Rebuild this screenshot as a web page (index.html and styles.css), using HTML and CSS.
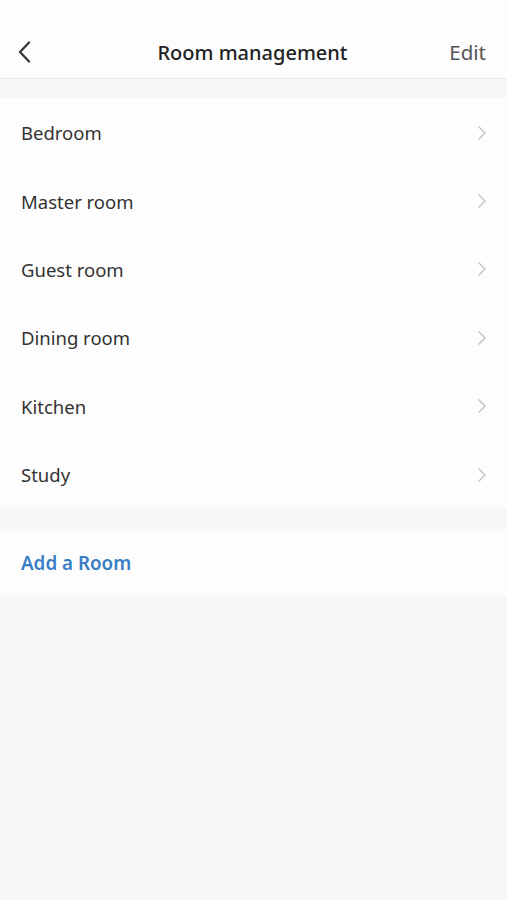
FILE: index.html
```html
<!DOCTYPE html>
<html>
<head>
<meta charset="utf-8">
<link rel="stylesheet" href="styles.css">
</head>
<body>
<div class="header">
  <div class="back">
    <svg width="14" height="22" viewBox="0 0 14 22"><path d="M12 1.5 L3 11 L12 20.5" fill="none" stroke="#333" stroke-width="2.2" stroke-linecap="round" stroke-linejoin="round"/></svg>
  </div>
  <div class="title">Room management</div>
  <div class="edit">Edit</div>
</div>
<div class="list">
  <div class="row"><span>Bedroom</span><svg class="chev" width="10" height="16" viewBox="0 0 10 16"><path d="M1.5 1.5 L8 8 L1.5 14.5" fill="none" stroke="#c8c8c8" stroke-width="1.6"/></svg></div>
  <div class="row"><span>Master room</span><svg class="chev" width="10" height="16" viewBox="0 0 10 16"><path d="M1.5 1.5 L8 8 L1.5 14.5" fill="none" stroke="#c8c8c8" stroke-width="1.6"/></svg></div>
  <div class="row"><span>Guest room</span><svg class="chev" width="10" height="16" viewBox="0 0 10 16"><path d="M1.5 1.5 L8 8 L1.5 14.5" fill="none" stroke="#c8c8c8" stroke-width="1.6"/></svg></div>
  <div class="row"><span>Dining room</span><svg class="chev" width="10" height="16" viewBox="0 0 10 16"><path d="M1.5 1.5 L8 8 L1.5 14.5" fill="none" stroke="#c8c8c8" stroke-width="1.6"/></svg></div>
  <div class="row"><span>Kitchen</span><svg class="chev" width="10" height="16" viewBox="0 0 10 16"><path d="M1.5 1.5 L8 8 L1.5 14.5" fill="none" stroke="#c8c8c8" stroke-width="1.6"/></svg></div>
  <div class="row"><span>Study</span><svg class="chev" width="10" height="16" viewBox="0 0 10 16"><path d="M1.5 1.5 L8 8 L1.5 14.5" fill="none" stroke="#c8c8c8" stroke-width="1.6"/></svg></div>
</div>
<div class="add">Add a Room</div>
</body>
</html>
```
FILE: styles.css
```css
html, body {
  margin: 0;
  padding: 0;
  background: #f7f7f7;
  font-family: "Noto Sans", "Liberation Sans", Arial, sans-serif;
  width: 507px;
  height: 900px;
}
.header {
  height: 78px;
  background: #fdfdfd;
  border-bottom: 1px solid #e8e8e8;
  display: flex;
  align-items: center;
}
.back {
  width: 50px;
  padding-left: 17px;
  padding-top: 26px;
  box-sizing: border-box;
  display: flex;
  align-items: center;
}
.title {
  flex: 1;
  text-align: center;
  font-size: 20px;
  font-weight: 500;
  color: #222;
  padding-top: 26px;
  padding-left: 18px;
}
.edit {
  width: 70px;
  text-align: right;
  padding-right: 21px;
  box-sizing: border-box;
  font-size: 20.5px;
  color: #555;
  padding-top: 26px;
}
.list {
  margin-top: 19px;
  background: #fdfdfd;
}
.row {
  height: 68.4px;
  display: flex;
  align-items: center;
  justify-content: space-between;
  padding: 0 20px 0 21px;
  font-size: 18.5px;
  color: #333;
}
.row span {
  padding-top: 1px;
}
.chev {
  display: block;
  margin-top: 1px;
}
.add {
  margin-top: 21px;
  height: 67px;
  background: #fdfdfd;
  display: flex;
  align-items: center;
  padding-left: 21px;
  font-size: 18.8px;
  font-weight: 600;
  color: #3a7ec6;
}
```
